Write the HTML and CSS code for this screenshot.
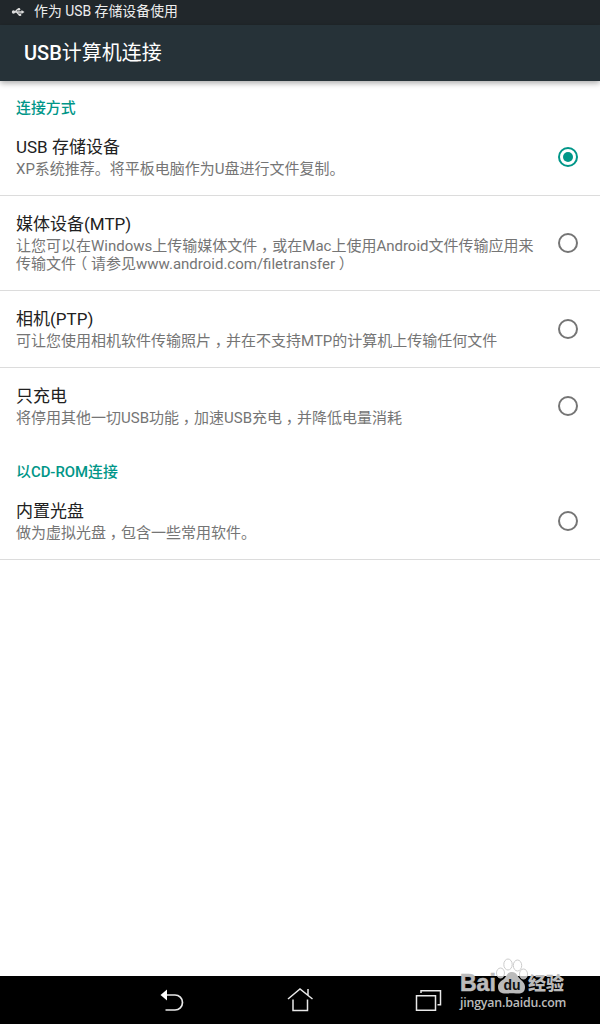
FILE: index.html
```html
<!DOCTYPE html>
<html lang="zh-CN">
<head>
    <meta charset="UTF-8">
    <meta name="viewport" content="width=device-width, initial-scale=1.0">
    <title>USB计算机连接</title>
    <link rel="stylesheet" href="styles.css">
</head>
<body>
    <div class="status-bar">
        <svg class="usb-icon" width="14" height="10" viewBox="0 0 14 10">
            <path d="M2 5h10M4 5l2.500-2.500H8M5.500 5L8 7.700h1.500" fill="none" stroke="#ddd" stroke-width="1.300"/>
            <circle cx="2.500" cy="5" r="1.700" fill="#ddd"/>
            <path d="M10.500 3l3 2-3 2z" fill="#ddd"/>
            <circle cx="8" cy="2.300" r="1.300" fill="#ddd"/>
            <path d="M7.800 6.500h2.400v2.400H7.800z" fill="#ddd"/>
        </svg>
        <span>作为 USB 存储设备使用</span>
    </div>

    <header>
        <h1><b>USB</b>计算机连接</h1>
    </header>

    <main>
        <h2>连接方式</h2>
        <div class="option">
            <div class="option-text">
                <h3>USB 存储设备</h3>
                <p>XP系统推荐。将平板电脑作为U盘进行文件复制。</p>
            </div>
            <span class="radio checked"></span>
        </div>
        <div class="option">
            <div class="option-text">
                <h3>媒体设备(MTP)</h3>
                <p>让您可以在Windows上传输媒体文件<span class="mark">&#xFF0C;</span>或在Mac上使用Android文件传输应用来<br>传输文件<span class="mark">&#xFF08;</span>请参见www.android.com/filetransfer<span class="mark">&#xFF09;</span></p>
            </div>
            <span class="radio"></span>
        </div>
        <div class="option">
            <div class="option-text">
                <h3>相机(PTP)</h3>
                <p>可让您使用相机软件传输照片<span class="mark">&#xFF0C;</span>并在不支持MTP的计算机上传输任何文件</p>
            </div>
            <span class="radio"></span>
        </div>
        <div class="option last">
            <div class="option-text">
                <h3>只充电</h3>
                <p>将停用其他一切USB功能<span class="mark">&#xFF0C;</span>加速USB充电<span class="mark">&#xFF0C;</span>并降低电量消耗</p>
            </div>
            <span class="radio"></span>
        </div>

        <h2>以<b>CD-ROM</b>连接</h2>
        <div class="option">
            <div class="option-text">
                <h3>内置光盘</h3>
                <p>做为虚拟光盘<span class="mark">&#xFF0C;</span>包含一些常用软件。</p>
            </div>
            <span class="radio"></span>
        </div>
    </main>

    <nav>
        <svg width="28" height="28" viewBox="0 0 28 28">
            <path d="M8 9h9a7.300 7.300 0 0 1 0 15H7.500" fill="none" stroke="#e8e8e8" stroke-width="1.700"/>
            <path d="M2.500 9L9 3.500v11z" fill="#fff"/>
        </svg>
        <svg width="28" height="28" viewBox="0 0 28 28">
            <path d="M2 13L14 3l12.500 10M22 9V3M7 13.500V24.500H21.500V13.500" fill="none" stroke="#e8e8e8" stroke-width="1.500"/>
        </svg>
        <svg width="28" height="28" viewBox="0 0 28 28">
            <path d="M2.500 9.700h19v14.500h-19zM7 7V4.700H26.500v14h-3" fill="none" stroke="#e8e8e8" stroke-width="1.500"/>
        </svg>
    </nav>

    <div class="watermark">
        <div class="brand">
            <span class="latin">Bai</span>
            <svg width="32" height="36" viewBox="0 0 32 36">
                <g fill="#fff" fill-opacity="0.700" stroke="#ccc" stroke-width="1">
                    <ellipse cx="4.500" cy="15" rx="4" ry="5"/>
                    <ellipse cx="12" cy="6.500" rx="4.200" ry="5.500"/>
                    <ellipse cx="21.500" cy="7.500" rx="4.200" ry="5.500"/>
                    <ellipse cx="27.500" cy="16" rx="4" ry="5"/>
                </g>
                <path d="M16 14c-5 0-5 4-8 7-3 2-6 4-6 8 0 6 5 7 9 6.500 3-.5 6-.5 9 0 5 .5 9-.5 9-6.500 0-4-3-6-5-8-3-3-3-7-8-7z" fill="#bbb"/>
                <text x="16" y="32" text-anchor="middle">du</text>
            </svg>
            <span class="cjk">经验</span>
        </div>
        <div class="site">jingyan.baidu.com</div>
    </div>
</body>
</html>
```

FILE: styles.css
```css
* {
    margin: 0;
    padding: 0;
    box-sizing: border-box;
}

body {
    display: flex;
    flex-direction: column;
    height: 1024px;
    overflow: hidden;
    background-color: #fff;
    font-family: Roboto, "Noto Sans CJK SC", sans-serif;
}

b {
    font-weight: 500;
}

.status-bar {
    display: flex;
    align-items: center;
    height: 25px;
    padding: 0 0 3px 11px;
    background-color: #21272b;
    color: #eee;
    font-size: 13.9px;
    line-height: 22px;
}

.usb-icon {
    margin: 2px 9px 0 0;
}

header {
    display: flex;
    align-items: center;
    height: 56px;
    padding: 1px 0 0 24px;
    background-color: #263238;
    box-shadow: 0 2px 6px rgba(0,0,0,0.35);
}

h1 {
    color: #fff;
    font-size: 20px;
    font-weight: 400;
    line-height: 29px;
}

main {
    flex: 1;
}

h2 {
    height: 38px;
    padding: 16px 16px 0;
    color: #009688;
    font-size: 14.9px;
    font-weight: 500;
    line-height: 22px;
}

.option {
    display: flex;
    justify-content: space-between;
    align-items: center;
    padding: 17px 22px 17px 16px;
    border-bottom: 1px solid #dcdcdc;
}

.option.last {
    border-bottom-color: transparent;
}

.option-text {
    white-space: nowrap;
}

h3 {
    height: 24px;
    color: #212121;
    font-size: 17px;
    font-weight: 400;
    line-height: 23px;
}

p {
    color: #757575;
    font-size: 15px;
    line-height: 18px;
}

/* full width punctuation, centered in its cell */
.mark {
    margin: 0 0.25em;
    font-feature-settings: "halt";
}

.radio {
    display: flex;
    align-items: center;
    justify-content: center;
    width: 20px;
    height: 20px;
    border: 2px solid #757575;
    border-radius: 50%;
}

.radio.checked {
    border-color: #009688;
}

.radio.checked::after {
    content: "";
    width: 10px;
    height: 10px;
    border-radius: 50%;
    background-color: #009688;
}

nav {
    display: flex;
    justify-content: center;
    align-items: center;
    gap: 100px;
    height: 48px;
    background-color: #000;
}

.watermark {
    position: absolute;
    left: 460px;
    top: 958px;
    color: #bbb;
}

.brand {
    display: flex;
    align-items: flex-end;
    height: 36px;
}

.latin {
    width: 36px;
    font-family: "Liberation Sans", sans-serif;
    font-size: 23px;
    font-weight: bold;
    line-height: 22px;
    -webkit-text-stroke: 0.6px #bbb;
}

.brand text {
    fill: #111;
    font-family: "Liberation Sans", sans-serif;
    font-size: 14px;
    font-weight: bold;
}

.cjk {
    font-size: 18px;
    font-weight: 900;
    line-height: 21px;
}

.site {
    font-family: "Open Sans", sans-serif;
    font-size: 12.4px;
    font-weight: 600;
    line-height: 17px;
    letter-spacing: -0.2px;
}
```
